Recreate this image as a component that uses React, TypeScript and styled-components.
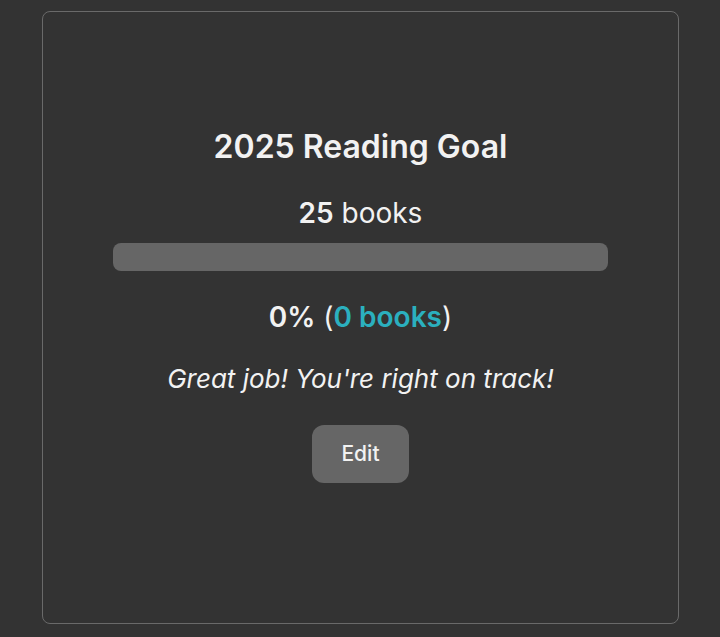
import React from "react";
import styled, { createGlobalStyle } from "styled-components";

const Global = createGlobalStyle`
  html, body { margin: 0; padding: 0; background: #333333; }
  body { font-family: Inter, "Open Sans", sans-serif; color: #f2f2f2; }
`;

const Page = styled.div`
  padding: 11px 41px 13px 42px;
  display: flex;
  justify-content: center;
`;

const Card = styled.section`
  box-sizing: border-box;
  width: 637px;
  height: 613px;
  border: 1px solid #6a6a6a;
  border-radius: 8px;
  padding: 116px 70px 0;
  display: flex;
  flex-direction: column;
  align-items: center;
`;

const Title = styled.h2`
  margin: 0 0 31px;
  font-size: 32px;
  font-weight: 600;
  line-height: 1.2;
`;

const Target = styled.div`
  font-size: 28px;
  font-weight: 400;
  line-height: 1.2;
  margin-bottom: 12px;
  strong { font-weight: 600; }
`;

const Track = styled.div`
  width: 100%;
  height: 28px;
  border-radius: 8px;
  background: #666666;
  overflow: hidden;
`;

const Fill = styled.div`
  height: 100%;
  background: #2bb0bf;
`;

const Progress = styled.div`
  margin-top: 30px;
  font-size: 28px;
  line-height: 1.2;
  strong { font-weight: 600; }
`;

const Accent = styled.span`
  color: #2bb0bf;
  font-weight: 600;
`;

const Message = styled.p`
  margin: 28px 0 0;
  font-size: 26px;
  font-style: italic;
  line-height: 1.2;
`;

const EditButton = styled.button`
  margin-top: 31px;
  width: 97px;
  height: 58px;
  border: none;
  border-radius: 12px;
  background: #666666;
  color: #f2f2f2;
  font-family: inherit;
  font-size: 21px;
  font-weight: 500;
  cursor: pointer;
`;

export default function App() {
  const goal = 25;
  const read = 0;
  const pct = Math.round((read / goal) * 100);
  return (
    <>
      <Global />
      <Page>
        <Card>
          <Title>2025 Reading Goal</Title>
          <Target>
            <strong>{goal}</strong> books
          </Target>
          <Track>
            <Fill style={{ width: `${pct}%` }} />
          </Track>
          <Progress>
            <strong>{pct}%</strong> (<Accent>{read} books</Accent>)
          </Progress>
          <Message>Great job! You're right on track!</Message>
          <EditButton>Edit</EditButton>
        </Card>
      </Page>
    </>
  );
}
